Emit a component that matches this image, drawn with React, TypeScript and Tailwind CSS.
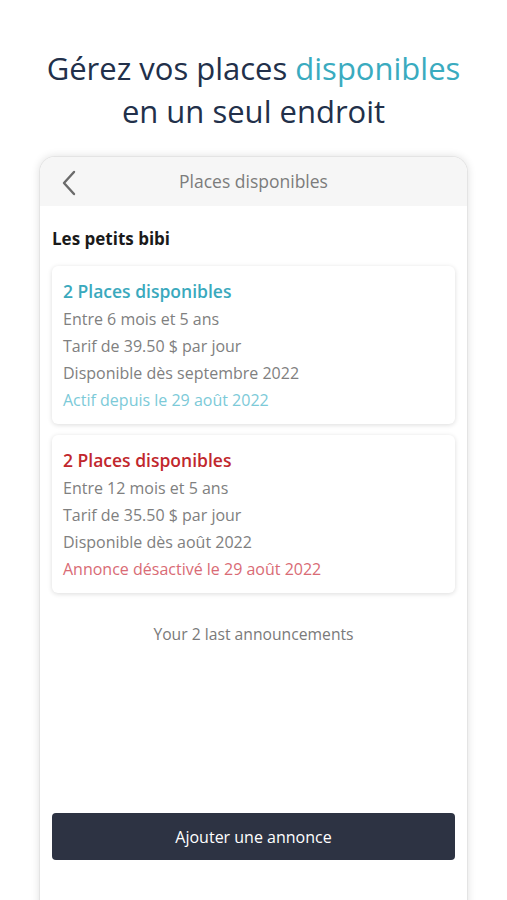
const font = { fontFamily: "'Open Sans', 'Noto Sans', sans-serif" };

type Ad = {
  tone: "active" | "off";
  age: string;
  price: string;
  from: string;
  status: string;
};

const ads: Ad[] = [
  {
    tone: "active",
    age: "Entre 6 mois et 5 ans",
    price: "Tarif de 39.50 $ par jour",
    from: "Disponible dès septembre 2022",
    status: "Actif depuis le 29 août 2022",
  },
  {
    tone: "off",
    age: "Entre 12 mois et 5 ans",
    price: "Tarif de 35.50 $ par jour",
    from: "Disponible dès août 2022",
    status: "Annonce désactivé le 29 août 2022",
  },
];

function AdCard({ ad }: { ad: Ad }) {
  const active = ad.tone === "active";
  return (
    <div className="rounded-md bg-white px-[11px] pt-[13px] pb-[10px] shadow-[0_1px_5px_rgba(0,0,0,0.14)]">
      <div
        className={`text-[17.5px] leading-[24px] font-semibold ${
          active ? "text-[#3aa9bd]" : "text-[#c1272d]"
        }`}
      >
        2 Places disponibles
      </div>
      <div className="mt-[3px] text-[16px] leading-[27px] text-[#808080]">
        <div>{ad.age}</div>
        <div>{ad.price}</div>
        <div>{ad.from}</div>
        <div className={active ? "text-[#7ccad8]" : "text-[#d96b75]"}>
          {ad.status}
        </div>
      </div>
    </div>
  );
}

export default function App() {
  return (
    <div className="h-[900px] overflow-hidden bg-white" style={font}>
      {/* Headline */}
      <div className="pt-[47px] text-center text-[31px] leading-[43px] text-[#22304a]">
        <div>
          Gérez vos places <span className="text-[#3aabbf]">disponibles</span>
        </div>
        <div>en un seul endroit</div>
      </div>

      {/* Phone frame */}
      <div className="mx-[39px] mt-[23px] h-[760px] rounded-t-[16px] border border-b-0 border-[#e4e4e4] bg-white shadow-[0_0_8px_rgba(0,0,0,0.12)] overflow-hidden flex flex-col">
        <div className="relative flex h-[49px] items-center justify-center bg-[#f6f6f6]">
          <svg
            className="absolute left-[21px] top-[13px]"
            width="16"
            height="26"
            viewBox="0 0 16 26"
            fill="none"
          >
            <path
              d="M13 2 L3 13 L13 24"
              stroke="#6b6b6b"
              strokeWidth="2.4"
              strokeLinecap="round"
              strokeLinejoin="round"
            />
          </svg>
          <span className="text-[17.5px] text-[#7c7c7c]">Places disponibles</span>
        </div>

        <div className="flex flex-1 flex-col px-[12px]">
          <div className="mt-[22px] text-[17px] leading-[22px] font-bold text-[#1a1a1a]">
            Les petits bibi
          </div>
          <div className="mt-[16px] flex flex-col gap-[11px]">
            {ads.map((ad, i) => (
              <AdCard key={i} ad={ad} />
            ))}
          </div>
          <div className="mt-[30px] text-center text-[15.7px] text-[#7a7a7a]">
            Your 2 last announcements
          </div>
          <div className="flex-1" />
          <button className="mb-[56px] h-[47px] rounded-[4px] bg-[#2d3343] text-[16px] text-white">
            Ajouter une annonce
          </button>
        </div>
      </div>
    </div>
  );
}
